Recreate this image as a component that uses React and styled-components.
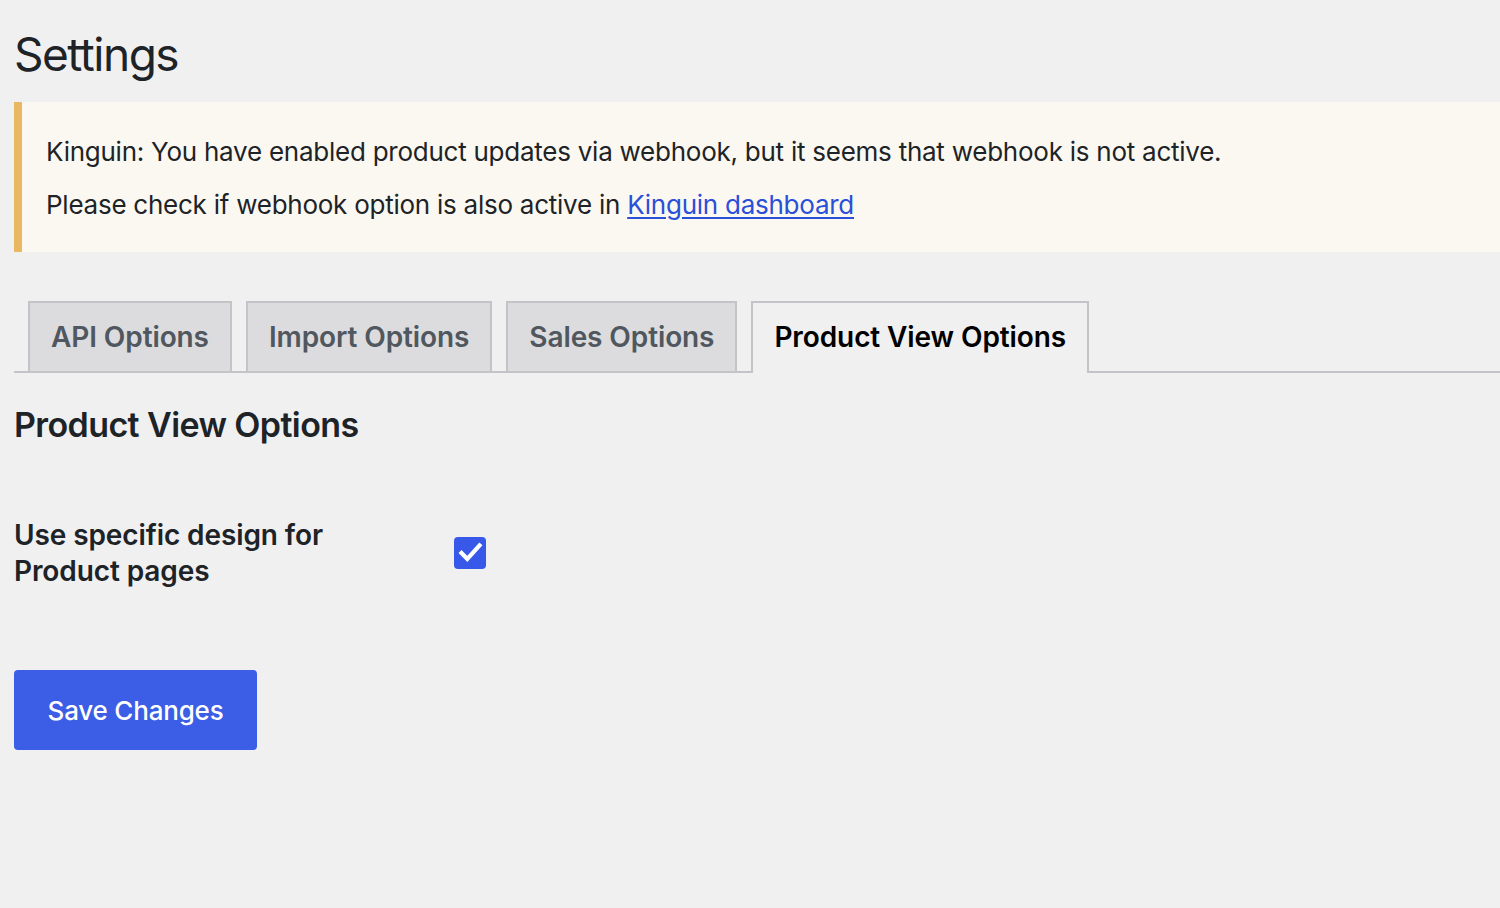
import React from 'react';
import styled, { createGlobalStyle } from 'styled-components';

const GlobalStyle = createGlobalStyle`
  html, body {
    margin: 0;
    padding: 0;
    background: #f0f0f1;
  }
  body {
    font-family: Inter, "Noto Sans", "Liberation Sans", sans-serif;
    color: #1d2327;
  }
`;

const tabs = ['API Options', 'Import Options', 'Sales Options', 'Product View Options'];

const Settings = () => {
  const active = 'Product View Options';
  return (
    <Wrap>
      <GlobalStyle />
      <Title>Settings</Title>
      <Notice>
        <p>Kinguin: You have enabled product updates via webhook, but it seems that webhook is not active.</p>
        <p>
          Please check if webhook option is also active in <a href="#dashboard">Kinguin dashboard</a>
        </p>
      </Notice>

      <TabBar>
        {tabs.map((tab) => (
          <Tab key={tab} $active={tab === active}>{tab}</Tab>
        ))}
      </TabBar>

      <SectionTitle>Product View Options</SectionTitle>

      <FormRow>
        <Label>Use specific design for Product pages</Label>
        <Field>
          <Checkbox>
            <svg width="32" height="32" viewBox="0 0 32 32">
              <path d="M7.5 16 L13.3 22 L25.5 8.5" fill="none" stroke="#fff" strokeWidth="4.2" strokeLinecap="square" strokeLinejoin="miter" />
            </svg>
          </Checkbox>
        </Field>
      </FormRow>

      <SaveButton>Save Changes</SaveButton>
    </Wrap>
  );
};

const Wrap = styled.div`
  padding: 0 0 0 14px;
  min-height: 908px;
  box-sizing: border-box;
  overflow: hidden;
`;

const Title = styled.h1`
  margin: 0;
  padding: 26px 0 0;
  font-size: 46px;
  font-weight: 400;
  line-height: 56px;
  letter-spacing: -1.5px;
  color: #1d2327;
`;

const Notice = styled.div`
  margin-top: 20px;
  background: #fbf8f1;
  border-left: 8px solid #ebb862;
  padding: 32px 24px 29px;
  font-size: 26px;
  line-height: 36px;
  letter-spacing: -0.25px;

  p {
    margin: 0 0 17px;
  }
  p:last-child {
    margin-bottom: 0;
  }

  a {
    color: #2a4fd9;
    text-decoration: underline;
    text-underline-offset: 3px;
    text-decoration-thickness: 2px;
  }
`;

const TabBar = styled.div`
  display: flex;
  gap: 14px;
  margin-top: 49px;
  padding-left: 14px;
  border-bottom: 2px solid #c3c4c7;
`;

const Tab = styled.div`
  padding: 10px 21px;
  line-height: 48px;
  font-size: 28px;
  font-weight: 600;
  letter-spacing: -0.1px;
  border: 2px solid #c3c4c7;
  border-bottom: none;
  margin-bottom: ${(p) => (p.$active ? '-2px' : '0')};
  padding-bottom: ${(p) => (p.$active ? '12px' : '10px')};
  background: ${(p) => (p.$active ? '#f0f0f1' : '#dcdcde')};
  color: ${(p) => (p.$active ? '#000' : '#50575e')};
`;

const SectionTitle = styled.h2`
  margin: 30px 0 0;
  font-size: 34px;
  font-weight: 600;
  line-height: 44px;
  letter-spacing: -0.6px;
`;

const FormRow = styled.div`
  display: flex;
  align-items: flex-start;
  margin-top: 70px;
`;

const Label = styled.div`
  width: 380px;
  padding-right: 20px;
  font-size: 28px;
  font-weight: 600;
  line-height: 36px;
  letter-spacing: -0.1px;
`;

const Field = styled.div`
  padding: 20px 0 0 40px;
`;

const Checkbox = styled.span`
  display: block;
  width: 32px;
  height: 32px;
  border-radius: 4px;
  background: #3858e9;

  svg {
    display: block;
  }
`;

const SaveButton = styled.button`
  display: block;
  margin-top: 81px;
  width: 243px;
  height: 80px;
  border: none;
  border-radius: 4px;
  background: #3c5de5;
  color: #fff;
  font-family: inherit;
  font-size: 26px;
  font-weight: 500;
  letter-spacing: -0.2px;
`;

export default function App() {
  return <Settings />;
}
